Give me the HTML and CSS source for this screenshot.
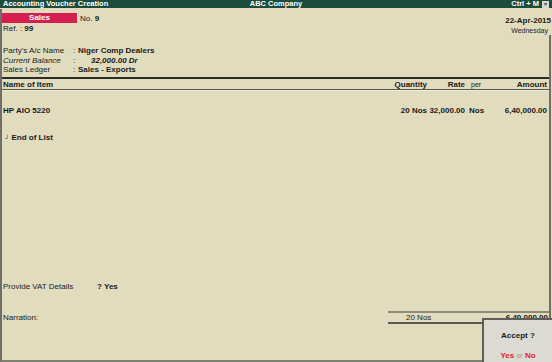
FILE: index.html
```html
<!DOCTYPE html>
<html>
<head>
<meta charset="utf-8">
<link rel="stylesheet" href="styles.css">
</head>
<body>
<div class="screen">
  <div class="titlebar">
    <span class="t-left">Accounting Voucher Creation</span>
    <span class="t-center">ABC Company</span>
    <span class="t-right">Ctrl + M <span class="closebox">×</span></span>
  </div>
  <div class="main">
    <div class="head">
      <div class="head-left">
        <div class="vrow">
          <span class="vtype">Sales</span>
          <span class="vno">No. <b>9</b></span>
        </div>
        <div class="ref">Ref. : <b>99</b></div>
      </div>
      <div class="head-right">
        <div class="date">22-Apr-2015</div>
        <div class="day">Wednesday</div>
      </div>
    </div>
    <div class="content">
      <div class="party">
        <div class="prow"><span class="plabel">Party's A/c Name</span><span class="pcolon">:</span><b>Niger Comp Dealers</b></div>
        <div class="prow"><span class="plabel ital">Current Balance</span><span class="pcolon">:</span><b class="bal">32,000.00 Dr</b></div>
        <div class="prow"><span class="plabel">Sales Ledger</span><span class="pcolon">:</span><b>Sales - Exports</b></div>
      </div>
      <div class="table">
        <div class="thead grid">
          <span>Name of Item</span>
          <span class="r">Quantity</span>
          <span class="r">Rate</span>
          <span class="per">per</span>
          <span class="r">Amount</span>
        </div>
        <div class="trow grid">
          <span>HP AIO 5220</span>
          <span class="r">20 Nos</span>
          <span class="r">32,000.00</span>
          <span class="perv">Nos</span>
          <span class="r">6,40,000.00</span>
        </div>
        <div class="eol"><span class="eolmark">&#x2518;</span> End of List</div>
      </div>
      <div class="spacer"></div>
      <div class="vat"><span class="vlabel">Provide VAT Details</span><span class="q">?</span><b>Yes</b></div>
      <div class="foot">
        <span class="narr">Narration:</span>
        <div class="totals">
          <span class="tq">20 Nos</span>
          <span class="ta">6,40,000.00</span>
        </div>
      </div>
    </div>
  </div>
  <div class="accept">
    <div class="acc-q">Accept ?</div>
    <div class="acc-a"><span class="red">Yes</span> <span class="or">or</span> <span class="red">No</span></div>
  </div>
</div>
</body>
</html>
```
FILE: styles.css
```css
* { box-sizing: border-box; }
html, body { margin: 0; padding: 0; }
body {
  width: 552px; height: 362px; overflow: hidden;
  background: #e1dcbd;
  font-family: "Liberation Sans", Arial, sans-serif;
  font-size: 8px;
  color: #1a1a1a;
}
b { font-weight: bold; }
.screen { position: relative; width: 552px; height: 362px; display: flex; flex-direction: column; }
.titlebar {
  height: 8px; background: #1c4c3c; color: #fff; font-weight: bold; font-size: 7.5px;
  display: flex; align-items: center; justify-content: space-between; padding: 0 3px 0 3px;
  line-height: 8px; position: relative;
}
.t-center { position: absolute; left: 0; right: 0; text-align: center; pointer-events: none; }
.t-right { display: flex; align-items: center; gap: 3px; }
.closebox {
  width: 7px; height: 7px; background: #d8d8d8; color: #333; font-size: 6px; line-height: 7px;
  text-align: center; display: inline-block;
}
.main {
  flex: 1; display: flex; flex-direction: column;
  border-left: 2px solid #6e6e6a; border-bottom: 2px solid #7c8171;
  margin-top: 1px;
}
.head { display: flex; justify-content: space-between; padding-top: 4px; }
.vrow { display: flex; align-items: center; height: 10px; }
.vtype {
  width: 75px; height: 10px; background: #d5204f; color: #fff; font-weight: bold;
  text-align: center; line-height: 10px; font-size: 8px;
}
.vno { margin-left: 3px; }
.ref { padding-left: 1px; margin-top: 1px; line-height: 10px; }
.head-right { text-align: right; padding-right: 1px; padding-top: 3px; }
.date { font-weight: bold; font-size: 8px; line-height: 10px; }
.day { font-size: 7px; line-height: 9px; color: #222; padding-right: 3px; }
.content {
  flex: 1; display: flex; flex-direction: column;
  margin-right: 1px; border-right: 2px solid #6e6e6a;
}
.party { margin-top: 11px; padding-left: 1px; }
.prow { display: flex; line-height: 9.5px; height: 9.5px; }
.plabel { width: 70px; }
.ital { font-style: italic; }
.pcolon { width: 5px; }
.bal { font-style: italic; padding-left: 13px; }
.table { margin-top: 2px; }
.grid { display: grid; grid-template-columns: 1fr 48px 38px 34px 48px; padding-left: 1px; padding-right: 2px; }
.r { text-align: right; }
.thead {
  border-top: 2px solid #2b2b28; border-bottom: 1px solid #55554d; height: 13px;
  line-height: 11px; font-weight: bold; box-shadow: 0 1px 0 #f0ecd6;
}
.thead .per { font-weight: normal; font-size: 7px; padding-left: 6px; }
.trow { margin-top: 16px; font-weight: bold; line-height: 10px; }
.perv { padding-left: 4px; }
.eol { margin-top: 17px; font-weight: bold; line-height: 10px; padding-left: 3px; }
.eolmark { font-size: 6px; font-weight: normal; vertical-align: top; }
.spacer { flex: 1; }
.vat { display: flex; line-height: 10px; padding-left: 1px; }
.vlabel { width: 94px; }
.q { width: 7px; font-weight: bold; }
.foot { display: flex; justify-content: space-between; margin-top: 19px; margin-bottom: 36px; height: 13px; }
.narr { line-height: 13px; padding-left: 1px; }
.totals {
  width: 161px; display: flex; justify-content: space-between;
  border-top: 2px solid #8c8a78; border-bottom: 2px solid #5b5a50; line-height: 9px; padding: 0 1px 0 18px;
}
.ta { font-weight: bold; }
.accept {
  position: absolute; left: 482px; top: 318px; width: 70px; height: 44px;
  background: #dcdbd3; border-left: 2px solid #5d5d5a; border-top: 2px solid #5d5d5a;
  display: flex; flex-direction: column; align-items: center; justify-content: space-between;
  padding: 11px 0 1px 0;
}
.acc-q { font-weight: bold; }
.acc-a { font-weight: bold; line-height: 10px; }
.red { color: #e5202a; }
.or { color: #9a9a9a; font-weight: normal; font-size: 7px; }
```
